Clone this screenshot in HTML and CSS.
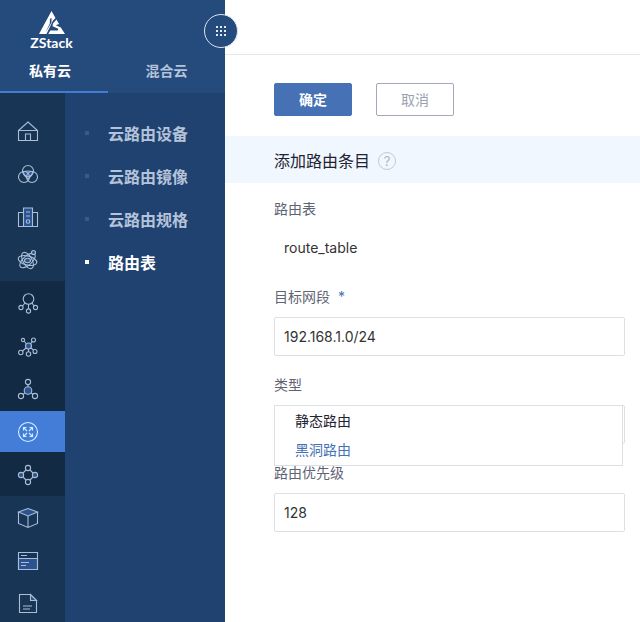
FILE: index.html
```html
<!DOCTYPE html>
<html lang="zh-CN">
<head>
<meta charset="utf-8">
<meta name="viewport" content="width=device-width, initial-scale=1">
<title>ZStack</title>
<link rel="stylesheet" href="styles.css">
</head>
<body>
<div class="app">
  <aside class="sidebar">
    <header class="brand">
      <a class="logo" href="#">
        <svg class="logo-mark" viewBox="0 0 26 24" aria-hidden="true">
          <path d="M12.500 0L16.500 7L14 9.500L7.500 23H0z"/>
          <path d="M17.500 8.500L20 13L16.800 14.200L21.800 16.500L26 23H9.300L11.300 19.500H18.800L19.300 17.800L13.500 15.200L14 12.500z"/>
          <path class="logo-cut" d="M11 8L12.500 7V11.500L6.500 21.500L10.800 12.500z"/>
        </svg>
        <span class="logo-name">ZStack</span>
      </a>
      <nav class="tabs">
        <a class="tab tab-active" href="#">私有云</a>
        <a class="tab" href="#">混合云</a>
      </nav>
      <button class="toggle" type="button" aria-label="menu">
        <svg viewBox="0 0 12 12" aria-hidden="true">
          <path d="M1 1h2v2h-2zM5 1h2v2h-2zM9 1h2v2h-2zM1 5h2v2h-2zM5 5h2v2h-2zM9 5h2v2h-2zM1 9h2v2h-2zM5 9h2v2h-2zM9 9h2v2h-2z"/>
        </svg>
      </button>
    </header>
    <div class="menus">
      <nav class="rail">
        <a class="rail-item" href="#" aria-label="home"><svg viewBox="0 0 20 20"><path d="M.5 9.500L10 1L19.500 9.500V19.500H.5zM.5 9.500H19.500M7.500 19.500V13H12.500V19.500"/></svg></a>
        <a class="rail-item" href="#" aria-label="pool"><svg viewBox="0 0 20 20"><path class="fill" d="M5 8Q10 6 15 8Q14 12 10 15Q6 12 5 8z"/><circle cx="10" cy="7" r="5.500"/><circle cx="6" cy="13" r="5.500"/><circle cx="14" cy="13" r="5.500"/></svg></a>
        <a class="rail-item" href="#" aria-label="hardware"><svg viewBox="0 0 20 20"><path d="M5.500 5.500H.5V19.500H19.500V5.500H14.500"/><path class="fill" d="M5.500 1H14.500V19.500H5.500z"/><path d="M8 5H12M8 9H12"/><circle cx="10" cy="14.500" r="1.800"/></svg></a>
        <a class="rail-item" href="#" aria-label="network"><svg viewBox="0 0 20 20"><ellipse cx="9.500" cy="10.500" rx="9.500" ry="4.500" transform="rotate(14 9.500 10.500)"/><ellipse cx="9.500" cy="10.500" rx="4.500" ry="9" transform="rotate(-30 9.500 10.500)"/><ellipse cx="9.500" cy="10.500" rx="4.500" ry="9.500" transform="rotate(48 9.500 10.500)"/><ellipse class="fill" cx="9.500" cy="10.500" rx="3" ry="2.200"/><circle class="fill" cx="15.500" cy="2.500" r="2"/></svg></a>
        <div class="rail-group">
          <a class="rail-item" href="#" aria-label="l2"><svg viewBox="0 0 20 20"><circle cx="10.500" cy="6" r="5.300"/><circle cx="3" cy="14.500" r="2.100"/><circle cx="17.500" cy="14.500" r="2.100"/><circle cx="10.500" cy="18" r="2.100"/><path d="M10.500 11V16M7 10L4.500 13M14 10L16 13"/></svg></a>
          <a class="rail-item" href="#" aria-label="l3"><svg viewBox="0 0 20 20"><circle class="fill" cx="10.500" cy="10" r="3"/><circle cx="5" cy="4" r="1.600"/><circle cx="15.500" cy="4" r="2"/><circle cx="2.800" cy="16.500" r="2.200"/><circle cx="10.500" cy="18" r="2.200"/><circle cx="17" cy="15.500" r="2"/><path d="M6 5L8.500 8M14 5.500L12.500 8M8 12L4.500 15M10.500 13V16M13 12L15.500 14"/></svg></a>
          <a class="rail-item" href="#" aria-label="vpc"><svg viewBox="0 0 20 20"><circle class="fill" cx="10" cy="11.500" r="3.800"/><circle cx="10" cy="3" r="2.600"/><circle cx="3" cy="17" r="2.600"/><circle cx="17" cy="17" r="2.600"/><path d="M10 5.600V7.700M7 14L5 15.300M13 14L15 15.300"/></svg></a>
          <a class="rail-item rail-active" href="#" aria-label="router"><svg viewBox="0 0 20 20"><circle cx="10" cy="10" r="9.500"/><path d="M5.500 8.500V5.500H8.500M5.500 5.500L9 9M11.500 5.500H14.500V8.500M14.500 5.500L11 9M5.500 11.500V14.500H8.500M5.500 14.500L9 11M14.500 11.500V14.500H11.500M14.500 14.500L11 11"/></svg></a>
          <a class="rail-item" href="#" aria-label="service"><svg viewBox="0 0 20 20"><circle cx="10" cy="3" r="2.600"/><circle cx="10" cy="17" r="2.600"/><circle class="fill" cx="3" cy="10" r="2.600"/><circle class="fill" cx="17" cy="10" r="2.600"/><path d="M8 5L5 8M12 5L15 8M5 12L8 15M15 12L12 15"/></svg></a>
        </div>
        <a class="rail-item" href="#" aria-label="resource"><svg viewBox="0 0 20 20"><path class="fill" d="M10 .5L19.500 4L10 8L.5 4z"/><path d="M.5 4V15.500L10 19.500L19.500 15.500V4M10 8V19.500"/></svg></a>
        <a class="rail-item" href="#" aria-label="platform"><svg viewBox="0 0 20 20"><path class="fill" d="M.5 7.500H19.500V18.500H.5z"/><path d="M.5 1.500H19.500V18.500H.5zM3 4.500H9M3 11.500H11M3 14.500H8"/></svg></a>
        <a class="rail-item" href="#" aria-label="logs"><svg viewBox="0 0 20 20"><path d="M1.500 .5H12.500L18.500 6.500V18.500H1.500z"/><path class="fill" d="M12.500 .5V6.500H18.500z"/><path d="M5 12H14M5 15H12"/></svg></a>
      </nav>
      <nav class="submenu">
        <a class="sub-item" href="#">云路由设备</a>
        <a class="sub-item" href="#">云路由镜像</a>
        <a class="sub-item" href="#">云路由规格</a>
        <a class="sub-item sub-active" href="#">路由表</a>
      </nav>
    </div>
  </aside>
  <main class="main">
    <div class="topbar"></div>
    <form class="form">
      <div class="actions">
        <button class="btn btn-primary" type="button">确定</button>
        <button class="btn" type="button">取消</button>
      </div>
      <div class="heading">
        <h1>添加路由条目</h1>
        <button class="help" type="button">?</button>
      </div>
      <div class="fields">
        <div class="field">
          <label for="table">路由表</label>
          <output class="value" id="table">route_table</output>
        </div>
        <div class="field">
          <label for="cidr">目标网段 <span class="required">*</span></label>
          <input class="control" id="cidr" type="text" value="192.168.1.0/24">
        </div>
        <div class="field">
          <label for="type">类型</label>
          <div class="dropdown">
            <select class="control" id="type"><option></option></select>
            <ul class="options" role="listbox">
              <li role="option">静态路由</li>
              <li class="option-active" role="option">黑洞路由</li>
            </ul>
          </div>
        </div>
        <div class="field">
          <label for="priority">路由优先级</label>
          <input class="control" id="priority" type="text" value="128">
        </div>
      </div>
    </form>
  </main>
</div>
</body>
</html>
```
FILE: styles.css
```css
* { box-sizing: border-box; }

body {
  margin: 0;
  font-family: Inter, "Noto Sans CJK SC", sans-serif;
  font-size: 14px;
  color: #333;
  background: #fff;
}

a { color: inherit; text-decoration: none; }
button, input, select { font: inherit; }

.app { display: flex; height: 100vh; }

/* Sidebar */
.sidebar {
  flex: 0 0 225px;
  display: flex;
  flex-direction: column;
  background: #204270;
}

.brand {
  position: relative;
  flex: none;
  padding-top: 11px;
  background: #254a7c;
}

.logo {
  display: flex;
  flex-direction: column;
  align-items: center;
  width: 103px;
  color: #fff;
}
.logo-mark { width: 26px; height: 24px; fill: #fff; }
.logo-mark .logo-cut { fill: #254a7c; }
.logo-name { font: bold 14px/16px Lato, sans-serif; }

.tabs { display: flex; margin-top: 3px; }
.tab {
  flex: 1;
  height: 39px;
  line-height: 34px;
  text-align: center;
  font-weight: bold;
  color: #b4c3d9;
}
.tab-active {
  flex: 0 0 108px;
  padding-right: 8px;
  color: #fff;
  border-bottom: 2px solid #447cd3;
}

.toggle {
  position: absolute;
  top: 14px;
  right: -13px;
  display: grid;
  place-items: center;
  width: 34px;
  height: 34px;
  padding: 0;
  border: 1px solid #dbe5f2;
  border-radius: 50%;
  background: #254a7c;
}
.toggle svg { width: 12px; height: 12px; fill: #e3ebf5; }

.menus { flex: 1; display: flex; min-height: 0; }

.rail {
  flex: 0 0 65px;
  padding-top: 16px;
  overflow: hidden;
  background: #183555;
}
.rail-group { background: #132a45; }
.rail-item {
  display: flex;
  align-items: center;
  height: 43px;
  padding-left: 18px;
}
.rail-item svg {
  width: 20px;
  height: 20px;
  overflow: visible;
  fill: none;
  stroke: #a9bdd6;
  stroke-width: 1.1;
}
.rail-item .fill { fill: #2b5390; }
.rail-active { background: #447dd8; border: solid #132a45; border-width: 1px 0; }
.rail-active svg { stroke: #d5f0ff; }

.submenu { flex: 1; padding-top: 18px; }
.sub-item {
  display: flex;
  align-items: center;
  gap: 19px;
  height: 43px;
  padding-left: 20px;
  font-size: 16px;
  font-weight: bold;
  color: #b4c3d9;
}
.sub-item::before {
  content: "";
  width: 4px;
  height: 4px;
  background: #36598f;
}
.sub-active { color: #fff; }
.sub-active::before { background: #fff; }

/* Main area */
.main { flex: 1; min-width: 0; }
.topbar { height: 55px; border-bottom: 1px solid #e6e7ea; }

.actions { display: flex; gap: 24px; padding: 28px 48px 20px 49px; }
.btn {
  width: 78px;
  height: 33px;
  padding: 0 0 2px;
  border: 1px solid #a3a9b8;
  border-radius: 2px;
  background: #fff;
  color: #9aa1b2;
}
.btn-primary {
  border-color: #4671b5;
  background: #4671b5;
  color: #fff;
  font-weight: bold;
}

.heading {
  display: flex;
  align-items: center;
  gap: 8px;
  height: 47px;
  padding: 3px 49px 0;
  background: #f0f7fe;
}
.heading h1 { margin: 0; font-size: 16px; line-height: 24px; font-weight: normal; color: #1f2333; }
.help {
  width: 18px;
  height: 18px;
  padding: 0;
  border: 1px solid #c4cad2;
  border-radius: 50%;
  background: none;
  font-size: 13px;
  line-height: 16px;
  color: #aeb5bf;
}

.fields { padding: 16px 15px 0 49px; }
.field { height: 88px; }
.field label { display: block; height: 30px; line-height: 20px; color: #5f6475; }
.required { margin-left: 4px; color: #4671b5; }
.value { display: block; padding-left: 10px; line-height: 38px; }

.control {
  display: block;
  width: 100%;
  height: 39px;
  padding: 0 9px;
  border: 1px solid #dcdfe6;
  border-radius: 2px;
  background: #fff;
  color: #333;
}
select.control { appearance: none; }

.dropdown { position: relative; }
.options {
  position: absolute;
  top: 0;
  left: 0;
  right: 2px;
  margin: 0;
  padding: 0 0 1px;
  list-style: none;
  border: 1px solid #dcdfe6;
  background: #fff;
  color: #1f2333;
}
.options li { height: 29px; padding-left: 20px; line-height: 29px; }
.options .option-active { color: #4671b5; }
```
